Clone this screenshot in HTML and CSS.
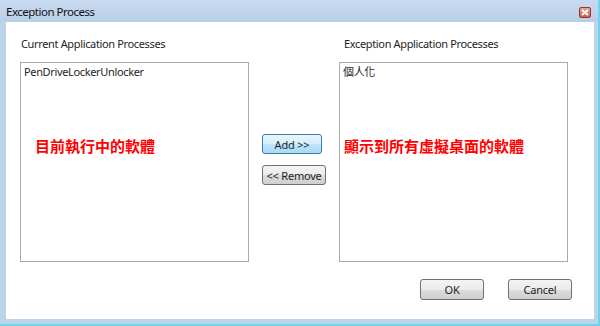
FILE: index.html
```html
<!DOCTYPE html>
<html lang="zh-Hant">

<head>
    <meta charset="UTF-8">
    <meta name="viewport" content="width=device-width, initial-scale=1.0">
    <title>Exception Process</title>
    <link rel="stylesheet" href="styles.css">
</head>

<body>
    <!-- Dialog window -->
    <div class="window">
        <div class="titlebar">
            <span class="title">Exception Process</span>
            <span class="close-btn">
                <svg width="8" height="7" viewBox="0 0 8 7">
                    <path d="M1 1 L7 6 M7 1 L1 6" stroke="#fff" stroke-width="1.8" />
                </svg>
            </span>
        </div>

        <div class="client">
            <div class="lists">
                <!-- Left: current processes -->
                <div class="column">
                    <div class="label">Current Application Processes</div>
                    <div class="listbox">
                        <div class="item">PenDriveLockerUnlocker</div>
                        <div class="note">目前執行中的軟體</div>
                    </div>
                </div>

                <!-- Middle: move buttons -->
                <div class="middle">
                    <button class="btn btn-default small">Add &gt;&gt;</button>
                    <button class="btn small wide">&lt;&lt; Remove</button>
                </div>

                <!-- Right: exception processes -->
                <div class="column">
                    <div class="label right-label">Exception Application Processes</div>
                    <div class="listbox">
                        <div class="item">個人化</div>
                        <div class="note note-right">顯示到所有虛擬桌面的軟體</div>
                    </div>
                </div>
            </div>

            <div class="footer">
                <button class="btn dialog-btn">OK</button>
                <button class="btn dialog-btn">Cancel</button>
            </div>
        </div>
    </div>
</body>

</html>
```

FILE: styles.css
```css
/* Basic page reset */
body {
    margin: 0;
    font-family: "Noto Sans", "Noto Sans CJK TC", sans-serif;
    font-size: 11px;
    letter-spacing: -0.35px;
    color: #1e1e1e;
}

.window {
    width: 600px;
    height: 326px;
    box-sizing: border-box;
    background-color: #bdd3ea;
    border-right: 2px solid #6fd2ef;
    border-bottom: 2px solid #6fd2ef;
    display: flex;
    flex-direction: column;
}

.titlebar {
    height: 22px;
    flex-shrink: 0;
    display: flex;
    align-items: center;
    justify-content: space-between;
    padding: 0 7px 0 6px;
    background: linear-gradient(#c9daee, #b8cfe9);
}

.title {
    font-size: 11.5px;
    letter-spacing: -0.5px;
    color: #111;
}

.close-btn {
    width: 12px;
    height: 11px;
    margin-top: 2px;
    box-sizing: border-box;
    border: 1px solid #8a3a32;
    border-radius: 2px;
    background: linear-gradient(#e8a493, #c8604f);
    display: flex;
    align-items: center;
    justify-content: center;
}

.client {
    flex: 1;
    margin: 0 4px 5px 6px;
    background-color: #fff;
    padding: 14px 0 0 14px;
    display: flex;
    flex-direction: column;
}

.lists {
    display: flex;
}

.column {
    display: flex;
    flex-direction: column;
}

.label {
    height: 16px;
    line-height: 16px;
    padding-left: 1px;
    margin-bottom: 10px;
}

.right-label {
    padding-left: 5px;
}

.listbox {
    position: relative;
    width: 229px;
    height: 200px;
    box-sizing: border-box;
    border: 1px solid #a9a9a9;
    padding: 1px 3px;
}

.item {
    line-height: 15px;
}

/* Red annotation written over the list */
.note {
    position: absolute;
    left: 14px;
    top: 72px;
    color: #f00;
    font-weight: bold;
    font-size: 15px;
    letter-spacing: 0;
    font-family: "Noto Sans CJK TC", sans-serif;
}

.note-right {
    left: 4px;
}

.middle {
    width: 90px;
    display: flex;
    flex-direction: column;
    align-items: center;
    gap: 11px;
    padding-top: 98px;
}

.btn {
    font-family: "Noto Sans", sans-serif;
    font-size: 11px;
    letter-spacing: -0.2px;
    color: #1e1e1e;
    height: 20px;
    padding: 0;
    border: 1px solid #707070;
    border-radius: 3px;
    background: linear-gradient(#f4f4f4 0%, #ebebeb 50%, #dddddd 51%, #cfcfcf 100%);
}

.btn-default {
    border-color: #3c7fb1;
    background: linear-gradient(#e8f6fd 0%, #d5eefc 50%, #bee6fd 51%, #a7d9f5 100%);
}

.small {
    width: 60px;
    margin-left: -4px;
}

.wide {
    width: 64px;
    margin-left: 0;
}

.footer {
    display: flex;
    justify-content: flex-end;
    gap: 24px;
    padding-right: 22px;
    margin-top: 17px;
}

.dialog-btn {
    width: 64px;
    height: 21px;
}
```
